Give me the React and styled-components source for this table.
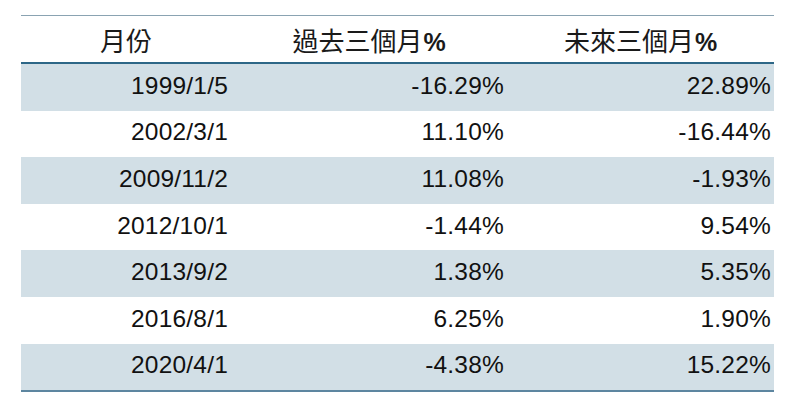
import styled, { createGlobalStyle } from 'styled-components';

const GlobalStyle = createGlobalStyle`
  html, body {
    margin: 0;
    padding: 0;
    background: #ffffff;
  }
  body {
    font-family: "Liberation Sans", Arial, "Noto Sans CJK TC", sans-serif;
    color: #111111;
  }
`;

const rows = [
  { date: '1999/1/5', past: '-16.29%', next: '22.89%' },
  { date: '2002/3/1', past: '11.10%', next: '-16.44%' },
  { date: '2009/11/2', past: '11.08%', next: '-1.93%' },
  { date: '2012/10/1', past: '-1.44%', next: '9.54%' },
  { date: '2013/9/2', past: '1.38%', next: '5.35%' },
  { date: '2016/8/1', past: '6.25%', next: '1.90%' },
  { date: '2020/4/1', past: '-4.38%', next: '15.22%' },
];

const Page = styled.div`
  padding: 15px 0 0 21px;
`;

const Table = styled.div`
  width: 753px;
  border-top: 1px solid #8aa3b2;
  border-bottom: 2px solid #5d86a0;
`;

const HeaderRow = styled.div`
  display: grid;
  grid-template-columns: 210px 276px 267px;
  height: 46px;
  border-bottom: 2px solid #2d6787;
  align-items: center;
`;

const HeadCell = styled.div`
  text-align: center;
  font-family: "Noto Sans CJK TC", "Liberation Sans", sans-serif;
  font-size: 26px;
  color: #1a1a1a;
  padding-top: 1px;
`;

const Pct = styled.span`
  font-family: "Liberation Sans", Arial, sans-serif;
  font-weight: bold;
  font-size: 25px;
  margin-left: 1px;
`;

const Row = styled.div`
  display: grid;
  grid-template-columns: 210px 276px 267px;
  height: 46.6px;
  align-items: center;
  background: ${(p) => (p.$striped ? '#d2dfe6' : '#ffffff')};
`;

const Cell = styled.div`
  text-align: right;
  padding-right: 3px;
  font-size: 24.5px;
  letter-spacing: 0.2px;
  padding-bottom: 3px;
`;

export default function App() {
  return (
    <>
      <GlobalStyle />
      <Page>
        <Table>
          <HeaderRow>
            <HeadCell>月份</HeadCell>
            <HeadCell>過去三個月<Pct>%</Pct></HeadCell>
            <HeadCell>未來三個月<Pct>%</Pct></HeadCell>
          </HeaderRow>
          {rows.map((r, i) => (
            <Row key={r.date} $striped={i % 2 === 0}>
              <Cell>{r.date}</Cell>
              <Cell>{r.past}</Cell>
              <Cell>{r.next}</Cell>
            </Row>
          ))}
        </Table>
      </Page>
    </>
  );
}
